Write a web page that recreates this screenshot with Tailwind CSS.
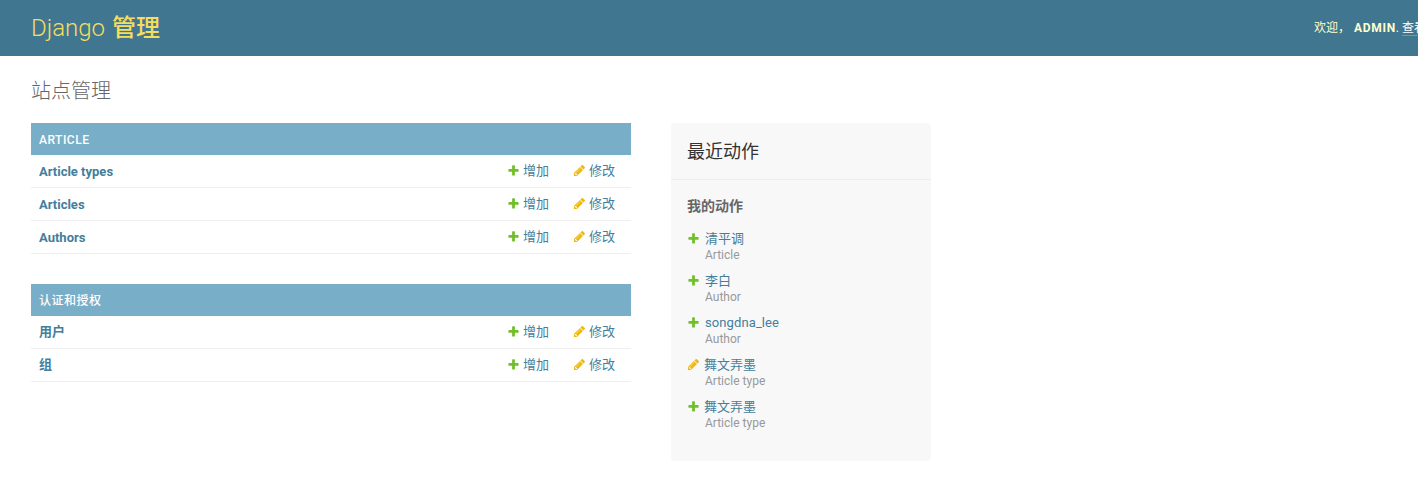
<!doctype html>
<html lang="zh">
<head>
<meta charset="utf-8">
<title>Django 管理</title>
<script src="https://cdn.jsdelivr.net/npm/@tailwindcss/browser@4"></script>
</head>
<body class="bg-white overflow-hidden h-[504px] font-['Roboto','Noto_Sans_CJK_SC',sans-serif] text-[13px] text-[#333]">
<header class="h-[56px] bg-[#417690] flex items-center pl-[31px] overflow-hidden whitespace-nowrap">
  <div class="w-[1283px] shrink-0 text-[24px] font-light text-[#f5dd5d] leading-[24px] mb-[1px]">Django <span class="font-medium ml-px">管理</span></div>
  <div class="shrink-0 text-[12px] text-[#ffc] mb-[1px]">欢迎， <strong class="font-bold uppercase text-[#ffffcc] tracking-[0.7px] ml-px">admin</strong>. <a class="border-b border-white/25 text-white">查看站点</a> / <a class="border-b border-white/25 text-white">修改密码</a></div>
</header>
<main class="pl-[31px] pt-[21px] flex flex-col">
  <h1 class="text-[20px] font-light leading-[28px] text-[#666] mb-[18px]">站点管理</h1>
  <div class="flex items-start">
    <div class="w-[600px] shrink-0 flex flex-col gap-[30px]">
      <section>
        <h2 class="h-[32px] px-[8px] pt-[2px] flex items-center bg-[#79aec8] text-white text-[12px] tracking-[0.5px] font-medium">ARTICLE</h2>
        <div class="h-[33px] flex items-center border-b border-[#eee] pl-[8px] pr-[16px]"><a class="font-bold text-[#447e9b] flex-1 mt-[2px]">Article types</a><a class="w-[66px] flex items-center gap-[3px] text-[#447e9b]"><svg class="w-[13px] h-[13px] mb-[2px]" viewBox="0 0 1792 1792"><path fill="#70bf2b" d="M1600 796v192q0 40-28 68t-68 28h-416v416q0 40-28 68t-68 28h-192q-40 0-68-28t-28-68v-416h-416q-40 0-68-28t-28-68v-192q0-40 28-68t68-28h416v-416q0-40 28-68t68-28h192q40 0 68 28t28 68v416h416q40 0 68 28t28 68z"/></svg>增加</a><a class="flex items-center gap-[3px] text-[#447e9b]"><svg class="w-[13px] h-[13px] mb-[2px]" viewBox="0 0 1792 1792"><path fill="#efb80b" d="M491 1536l91-91-235-235-91 91v107h128v128h107zm523-928q0-22-22-22-10 0-17 7l-542 542q-7 7-7 17 0 22 22 22 10 0 17-7l542-542q7-7 7-17zm-54-192l416 416-832 832h-416v-416zm683 96q0 53-37 90l-166 166-416-416 166-165q36-38 90-38 53 0 91 38l235 234q37 39 37 91z"/></svg>修改</a></div>
        <div class="h-[33px] flex items-center border-b border-[#eee] pl-[8px] pr-[16px]"><a class="font-bold text-[#447e9b] flex-1 mt-[2px]">Articles</a><a class="w-[66px] flex items-center gap-[3px] text-[#447e9b]"><svg class="w-[13px] h-[13px] mb-[2px]" viewBox="0 0 1792 1792"><path fill="#70bf2b" d="M1600 796v192q0 40-28 68t-68 28h-416v416q0 40-28 68t-68 28h-192q-40 0-68-28t-28-68v-416h-416q-40 0-68-28t-28-68v-192q0-40 28-68t68-28h416v-416q0-40 28-68t68-28h192q40 0 68 28t28 68v416h416q40 0 68 28t28 68z"/></svg>增加</a><a class="flex items-center gap-[3px] text-[#447e9b]"><svg class="w-[13px] h-[13px] mb-[2px]" viewBox="0 0 1792 1792"><path fill="#efb80b" d="M491 1536l91-91-235-235-91 91v107h128v128h107zm523-928q0-22-22-22-10 0-17 7l-542 542q-7 7-7 17 0 22 22 22 10 0 17-7l542-542q7-7 7-17zm-54-192l416 416-832 832h-416v-416zm683 96q0 53-37 90l-166 166-416-416 166-165q36-38 90-38 53 0 91 38l235 234q37 39 37 91z"/></svg>修改</a></div>
        <div class="h-[33px] flex items-center border-b border-[#eee] pl-[8px] pr-[16px]"><a class="font-bold text-[#447e9b] flex-1 mt-[2px]">Authors</a><a class="w-[66px] flex items-center gap-[3px] text-[#447e9b]"><svg class="w-[13px] h-[13px] mb-[2px]" viewBox="0 0 1792 1792"><path fill="#70bf2b" d="M1600 796v192q0 40-28 68t-68 28h-416v416q0 40-28 68t-68 28h-192q-40 0-68-28t-28-68v-416h-416q-40 0-68-28t-28-68v-192q0-40 28-68t68-28h416v-416q0-40 28-68t68-28h192q40 0 68 28t28 68v416h416q40 0 68 28t28 68z"/></svg>增加</a><a class="flex items-center gap-[3px] text-[#447e9b]"><svg class="w-[13px] h-[13px] mb-[2px]" viewBox="0 0 1792 1792"><path fill="#efb80b" d="M491 1536l91-91-235-235-91 91v107h128v128h107zm523-928q0-22-22-22-10 0-17 7l-542 542q-7 7-7 17 0 22 22 22 10 0 17-7l542-542q7-7 7-17zm-54-192l416 416-832 832h-416v-416zm683 96q0 53-37 90l-166 166-416-416 166-165q36-38 90-38 53 0 91 38l235 234q37 39 37 91z"/></svg>修改</a></div>
      </section>
      <section>
        <h2 class="h-[32px] px-[8px] pt-[2px] flex items-center bg-[#79aec8] text-white text-[12px] tracking-[0.5px] font-medium">认证和授权</h2>
        <div class="h-[33px] flex items-center border-b border-[#eee] pl-[8px] pr-[16px]"><a class="font-bold text-[#447e9b] flex-1">用户</a><a class="w-[66px] flex items-center gap-[3px] text-[#447e9b]"><svg class="w-[13px] h-[13px] mb-[2px]" viewBox="0 0 1792 1792"><path fill="#70bf2b" d="M1600 796v192q0 40-28 68t-68 28h-416v416q0 40-28 68t-68 28h-192q-40 0-68-28t-28-68v-416h-416q-40 0-68-28t-28-68v-192q0-40 28-68t68-28h416v-416q0-40 28-68t68-28h192q40 0 68 28t28 68v416h416q40 0 68 28t28 68z"/></svg>增加</a><a class="flex items-center gap-[3px] text-[#447e9b]"><svg class="w-[13px] h-[13px] mb-[2px]" viewBox="0 0 1792 1792"><path fill="#efb80b" d="M491 1536l91-91-235-235-91 91v107h128v128h107zm523-928q0-22-22-22-10 0-17 7l-542 542q-7 7-7 17 0 22 22 22 10 0 17-7l542-542q7-7 7-17zm-54-192l416 416-832 832h-416v-416zm683 96q0 53-37 90l-166 166-416-416 166-165q36-38 90-38 53 0 91 38l235 234q37 39 37 91z"/></svg>修改</a></div>
        <div class="h-[33px] flex items-center border-b border-[#eee] pl-[8px] pr-[16px]"><a class="font-bold text-[#447e9b] flex-1">组</a><a class="w-[66px] flex items-center gap-[3px] text-[#447e9b]"><svg class="w-[13px] h-[13px] mb-[2px]" viewBox="0 0 1792 1792"><path fill="#70bf2b" d="M1600 796v192q0 40-28 68t-68 28h-416v416q0 40-28 68t-68 28h-192q-40 0-68-28t-28-68v-416h-416q-40 0-68-28t-28-68v-192q0-40 28-68t68-28h416v-416q0-40 28-68t68-28h192q40 0 68 28t28 68v416h416q40 0 68 28t28 68z"/></svg>增加</a><a class="flex items-center gap-[3px] text-[#447e9b]"><svg class="w-[13px] h-[13px] mb-[2px]" viewBox="0 0 1792 1792"><path fill="#efb80b" d="M491 1536l91-91-235-235-91 91v107h128v128h107zm523-928q0-22-22-22-10 0-17 7l-542 542q-7 7-7 17 0 22 22 22 10 0 17-7l542-542q7-7 7-17zm-54-192l416 416-832 832h-416v-416zm683 96q0 53-37 90l-166 166-416-416 166-165q36-38 90-38 53 0 91 38l235 234q37 39 37 91z"/></svg>修改</a></div>
      </section>
    </div>
    <aside class="ml-[40px] w-[260px] h-[338px] bg-[#f8f8f8] rounded-[4px] shrink-0">
      <h2 class="h-[57px] pl-[16px] flex items-center border-b border-[#eee] text-[18px] font-normal text-[#333]">最近动作</h2>
      <h3 class="mt-[16px] pl-[16px] h-[20px] leading-[20px] text-[14px] font-bold text-[#666]">我的动作</h3>
      <ul class="mt-[15px] pl-[16px] flex flex-col gap-[10px]">
        <li class="h-[32px] flex items-start"><svg class="w-[13px] h-[13px] mt-[1px] mr-[5px] shrink-0" viewBox="0 0 1792 1792"><path fill="#70bf2b" d="M1600 796v192q0 40-28 68t-68 28h-416v416q0 40-28 68t-68 28h-192q-40 0-68-28t-28-68v-416h-416q-40 0-68-28t-28-68v-192q0-40 28-68t68-28h416v-416q0-40 28-68t68-28h192q40 0 68 28t28 68v416h416q40 0 68 28t28 68z"/></svg><div class="flex flex-col"><a class="leading-[16px] text-[#447e9b]">清平调</a><span class="leading-[16px] text-[12px] text-[#999]">Article</span></div></li>
        <li class="h-[32px] flex items-start"><svg class="w-[13px] h-[13px] mt-[1px] mr-[5px] shrink-0" viewBox="0 0 1792 1792"><path fill="#70bf2b" d="M1600 796v192q0 40-28 68t-68 28h-416v416q0 40-28 68t-68 28h-192q-40 0-68-28t-28-68v-416h-416q-40 0-68-28t-28-68v-192q0-40 28-68t68-28h416v-416q0-40 28-68t68-28h192q40 0 68 28t28 68v416h416q40 0 68 28t28 68z"/></svg><div class="flex flex-col"><a class="leading-[16px] text-[#447e9b]">李白</a><span class="leading-[16px] text-[12px] text-[#999]">Author</span></div></li>
        <li class="h-[32px] flex items-start"><svg class="w-[13px] h-[13px] mt-[1px] mr-[5px] shrink-0" viewBox="0 0 1792 1792"><path fill="#70bf2b" d="M1600 796v192q0 40-28 68t-68 28h-416v416q0 40-28 68t-68 28h-192q-40 0-68-28t-28-68v-416h-416q-40 0-68-28t-28-68v-192q0-40 28-68t68-28h416v-416q0-40 28-68t68-28h192q40 0 68 28t28 68v416h416q40 0 68 28t28 68z"/></svg><div class="flex flex-col"><a class="leading-[16px] text-[#447e9b] tracking-[0.1px]">songdna_lee</a><span class="leading-[16px] text-[12px] text-[#999]">Author</span></div></li>
        <li class="h-[32px] flex items-start"><svg class="w-[13px] h-[13px] mt-[1px] mr-[4px] shrink-0" viewBox="0 0 1792 1792"><path fill="#efb80b" d="M491 1536l91-91-235-235-91 91v107h128v128h107zm523-928q0-22-22-22-10 0-17 7l-542 542q-7 7-7 17 0 22 22 22 10 0 17-7l542-542q7-7 7-17zm-54-192l416 416-832 832h-416v-416zm683 96q0 53-37 90l-166 166-416-416 166-165q36-38 90-38 53 0 91 38l235 234q37 39 37 91z"/></svg><div class="flex flex-col"><a class="leading-[16px] text-[#447e9b]">舞文弄墨</a><span class="leading-[16px] text-[12px] text-[#999] ml-[1px]">Article type</span></div></li>
        <li class="h-[32px] flex items-start"><svg class="w-[13px] h-[13px] mt-[1px] mr-[4px] shrink-0" viewBox="0 0 1792 1792"><path fill="#70bf2b" d="M1600 796v192q0 40-28 68t-68 28h-416v416q0 40-28 68t-68 28h-192q-40 0-68-28t-28-68v-416h-416q-40 0-68-28t-28-68v-192q0-40 28-68t68-28h416v-416q0-40 28-68t68-28h192q40 0 68 28t28 68v416h416q40 0 68 28t28 68z"/></svg><div class="flex flex-col"><a class="leading-[16px] text-[#447e9b]">舞文弄墨</a><span class="leading-[16px] text-[12px] text-[#999] ml-[1px]">Article type</span></div></li>
      </ul>
    </aside>
  </div>
</main>
</body>
</html>
